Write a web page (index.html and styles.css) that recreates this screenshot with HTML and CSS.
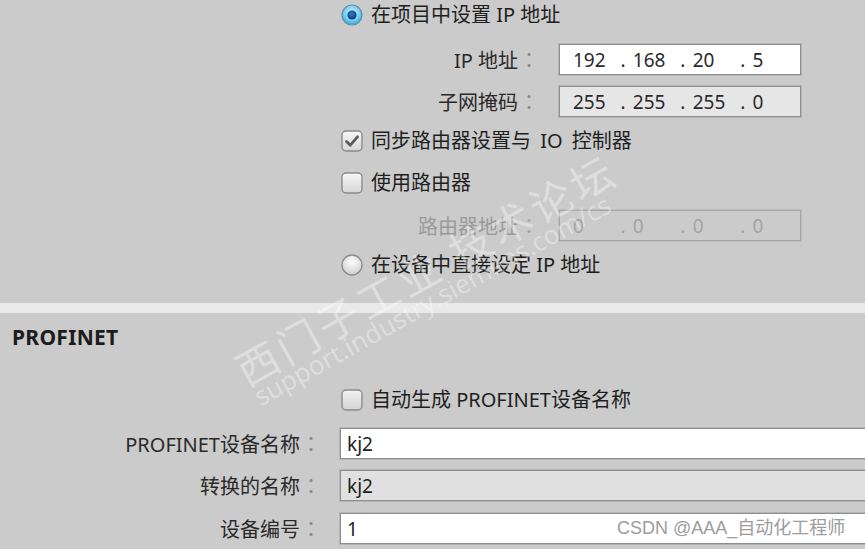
FILE: index.html
```html
<!DOCTYPE html>
<html lang="zh-CN">
<head>
<meta charset="utf-8">
<title>PROFINET 接口设置</title>
<link rel="stylesheet" href="styles.css">
</head>
<body>
<div class="page">
  <section class="top">
    <div class="row r1">
      <span class="ctl"><svg width="22" height="22" viewBox="0 0 22 22"><defs><radialGradient id="rb" cx="50%" cy="40%" r="60%"><stop offset="0" stop-color="#d9f6ff"/><stop offset="0.6" stop-color="#7fd0ef"/><stop offset="1" stop-color="#3d9fd0"/></radialGradient><radialGradient id="rd" cx="45%" cy="40%" r="60%"><stop offset="0" stop-color="#2f7fc8"/><stop offset="1" stop-color="#0a3a7a"/></radialGradient></defs><circle cx="11" cy="11" r="10" fill="url(#rb)" stroke="#5a8fb2" stroke-width="1.2"/><circle cx="11" cy="11" r="4.6" fill="url(#rd)"/></svg></span>
      <span class="opt">在项目中设置 IP 地址</span>
    </div>
    <div class="field r2">
      <span class="lbl">IP 地址<span class="colon">：</span></span>
      <div class="ip white"><span class="oct">192</span><span class="dot">.</span><span class="oct">168</span><span class="dot">.</span><span class="oct">20</span><span class="dot">.</span><span class="oct">5</span></div>
    </div>
    <div class="field r3">
      <span class="lbl">子网掩码<span class="colon">：</span></span>
      <div class="ip grey"><span class="oct">255</span><span class="dot">.</span><span class="oct">255</span><span class="dot">.</span><span class="oct">255</span><span class="dot">.</span><span class="oct">0</span></div>
    </div>
    <div class="row r4">
      <span class="ctl"><svg width="22" height="22" viewBox="0 0 22 22"><defs><linearGradient id="cb1" x1="0" y1="0" x2="0" y2="1"><stop offset="0" stop-color="#f7f7f7"/><stop offset="1" stop-color="#d6d6d6"/></linearGradient></defs><rect x="1" y="1" width="20" height="20" rx="4" fill="url(#cb1)" stroke="#8c8c8c" stroke-width="1.4"/><path d="M5.5 11.5 L9.3 15.2 L16.5 6.8" fill="none" stroke="#5a5a5a" stroke-width="2.8" stroke-linecap="round" stroke-linejoin="round"/></svg></span>
      <span class="opt wide">同步路由器设置与 IO 控制器</span>
    </div>
    <div class="row r5">
      <span class="ctl"><svg width="22" height="22" viewBox="0 0 22 22"><defs><linearGradient id="cb2" x1="0" y1="0" x2="0" y2="1"><stop offset="0" stop-color="#f7f7f7"/><stop offset="1" stop-color="#d6d6d6"/></linearGradient></defs><rect x="1" y="1" width="20" height="20" rx="4" fill="url(#cb2)" stroke="#8c8c8c" stroke-width="1.4"/></svg></span>
      <span class="opt">使用路由器</span>
    </div>
    <div class="field r6">
      <span class="lbl off">路由器地址<span class="colon">：</span></span>
      <div class="ip dis"><span class="oct">0</span><span class="dot">.</span><span class="oct">0</span><span class="dot">.</span><span class="oct">0</span><span class="dot">.</span><span class="oct">0</span></div>
    </div>
    <div class="row r7">
      <span class="ctl"><svg width="22" height="22" viewBox="0 0 22 22"><defs><radialGradient id="rg" cx="50%" cy="35%" r="65%"><stop offset="0" stop-color="#fdfdfd"/><stop offset="1" stop-color="#cfcfcf"/></radialGradient></defs><circle cx="11" cy="11" r="10" fill="url(#rg)" stroke="#8a8a8a" stroke-width="1.3"/></svg></span>
      <span class="opt">在设备中直接设定 IP 地址</span>
    </div>
  </section>

  <div class="sep"></div>

  <section class="pn">
    <h2 class="title">PROFINET</h2>
    <div class="row auto">
      <span class="ctl"><svg width="22" height="22" viewBox="0 0 22 22"><defs><linearGradient id="cb3" x1="0" y1="0" x2="0" y2="1"><stop offset="0" stop-color="#f2f2f2"/><stop offset="1" stop-color="#d2d2d2"/></linearGradient></defs><rect x="1" y="1" width="20" height="20" rx="4" fill="url(#cb3)" stroke="#8c8c8c" stroke-width="1.4"/></svg></span>
      <span class="opt">自动生成 PROFINET设备名称</span>
    </div>
    <div class="frow f1">
      <span class="lbl2">PROFINET设备名称<span class="colon">：</span></span>
      <div class="tbox white">kj2</div>
    </div>
    <div class="frow f2">
      <span class="lbl2">转换的名称<span class="colon">：</span></span>
      <div class="tbox grey2">kj2</div>
    </div>
    <div class="frow f3">
      <span class="lbl2">设备编号<span class="colon">：</span></span>
      <div class="tbox white">1</div>
    </div>
  </section>

  <div class="wm wm1">西门子工业 技术论坛</div>
  <div class="wm wm2">support.industry.siemens.com/cs</div>
  <div class="csdn">CSDN @AAA_自动化工程师</div>
</div>
</body>
</html>
```
FILE: styles.css
```css
html, body {
  margin: 0;
  padding: 0;
}
body {
  background: #cbcbcb;
  font-family: "Noto Sans", "Noto Sans CJK SC", sans-serif;
  color: #1f1f1f;
}
.page {
  position: relative;
  width: 865px;
  height: 549px;
  overflow: hidden;
  background: #cbcbcb;
}
.top {
  display: flex;
  flex-direction: column;
  padding-left: 341px;
}
.row {
  display: flex;
  align-items: center;
  height: 30px;
  gap: 8px;
}
.ctl {
  display: flex;
  width: 22px;
  height: 22px;
}
.opt {
  font-size: 20px;
  line-height: 30px;
  white-space: nowrap;
}
.opt.wide { word-spacing: 4px; }
.field {
  display: grid;
  grid-template-columns: 199px 242px;
  column-gap: 19px;
  align-items: center;
  height: 30px;
}
.lbl {
  display: flex;
  justify-content: flex-end;
  align-items: center;
  font-size: 20px;
  color: #2a2a2a;
  white-space: nowrap;
}
.colon {
  display: inline-block;
  width: 22px;
  text-align: center;
  font-family: "Noto Sans CJK TC", sans-serif;
  color: #8a8a8a;
}
.lbl.off { color: #9a9a9a; }
.lbl.off .colon { color: #a8a8a8; }
.r2 { margin-top: 14px; }
.r3 { margin-top: 12px; }
.r4 { margin-top: 10px; }
.r5 { margin-top: 12px; }
.r6 { margin-top: 12px; }
.r7 { margin-top: 10px; }

.ip {
  box-sizing: border-box;
  height: 31px;
  display: flex;
  align-items: center;
  padding-left: 13px;
  border: 1px solid #8f8f8f;
  box-shadow: 0 0 0 1px #b4b4b4;
  font-size: 19px;
  color: #2b2b2b;
}
.ip.white { background: #ffffff; }
.ip.grey { background: #e6e6e6; }
.ip.dis {
  background: transparent;
  color: #a4a4a4;
  border-color: #a6a6a6;
  box-shadow: 0 0 0 1px #bdbdbd;
}
.oct { width: 50px; }
.dot { width: 13px; }

.sep {
  margin-top: 23px;
  height: 10px;
  background: #e9e9e9;
}
.pn {
  display: flex;
  flex-direction: column;
}
.title {
  margin: 9px 0 0 12px;
  height: 30px;
  line-height: 30px;
  font-size: 21px;
  font-weight: 700;
  color: #1c1c1c;
  letter-spacing: 0.3px;
}
.auto {
  margin-top: 33px;
  padding-left: 341px;
}
.frow {
  display: flex;
  align-items: center;
  gap: 18px;
  width: 900px;
}
.lbl2 {
  display: flex;
  justify-content: flex-end;
  align-items: center;
  width: 322px;
  flex: none;
  font-size: 20px;
  color: #2a2a2a;
  white-space: nowrap;
}
.tbox {
  box-sizing: border-box;
  flex: 1;
  height: 31px;
  padding-left: 6px;
  display: flex;
  align-items: center;
  border: 1px solid #8f8f8f;
  box-shadow: 0 0 0 1px #b4b4b4;
  font-size: 19px;
  color: #222;
}
.tbox.white { background: #ffffff; }
.tbox.grey2 { background: #e0e0e0; }
.f1 { margin-top: 13px; }
.f2 { margin-top: 11px; }
.f3 { margin-top: 12px; }

.wm {
  position: absolute;
  white-space: nowrap;
  color: rgba(255, 255, 255, 0.38);
  transform: translate(-50%, -50%) rotate(-29deg);
  pointer-events: none;
}
.wm1 {
  left: 425px;
  top: 268px;
  font-size: 42px;
  letter-spacing: 4px;
  font-family: "Noto Sans CJK SC", sans-serif;
}
.wm2 {
  left: 432px;
  top: 300px;
  font-size: 26px;
  font-family: "Open Sans", sans-serif;
}
.csdn {
  position: absolute;
  left: 617px;
  top: 515px;
  font-size: 18px;
  line-height: 26px;
  color: #9c9c9c;
  font-family: "Liberation Sans", "Noto Sans CJK SC", sans-serif;
  text-shadow: 0 0 2px #ffffff;
  white-space: nowrap;
}
```
